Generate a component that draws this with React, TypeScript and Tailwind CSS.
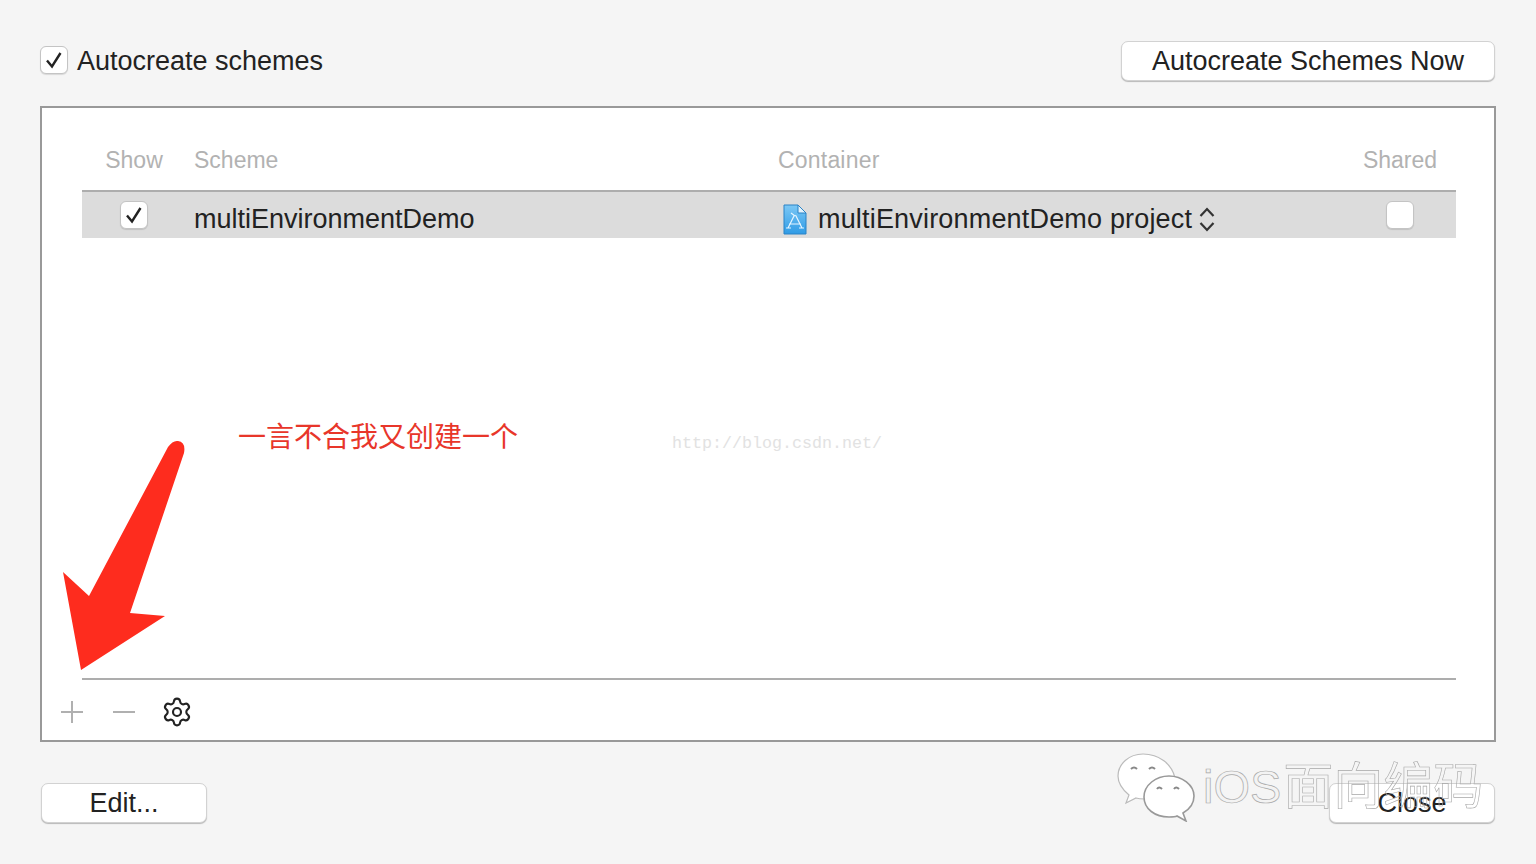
import { Settings } from "lucide-react";

const sans = "font-['Liberation_Sans','Noto_Sans_CJK_SC',sans-serif]";

const Checkbox = ({ checked = false }: { checked?: boolean }) => (
  <span className="flex h-[28px] w-[28px] shrink-0 items-center justify-center rounded-[6px] border border-[#c4c4c4] bg-white shadow-[0_1px_1px_rgba(0,0,0,0.12)]">
    {checked && (
      <svg width="18" height="18" viewBox="0 0 18 18" fill="none">
        <path d="M2 9.500 7 15.500 15.500 2" stroke="#222" strokeWidth="2.4" />
      </svg>
    )}
  </span>
);

const Button = ({ label, className }: { label: string; className: string }) => (
  <button
    className={`flex h-[40px] items-center justify-center rounded-[7px] border border-[#d2d2d2] bg-white text-[27px] text-[#222] shadow-[0_1px_1px_rgba(0,0,0,0.25)] ${className}`}
  >
    {label}
  </button>
);

const ProjectIcon = () => (
  <svg width="24" height="31" viewBox="0 0 24 31" className="shrink-0">
    <defs>
      <linearGradient id="doc" x1="0" y1="0" x2="0" y2="1">
        <stop offset="0" stopColor="#7cc8f5" />
        <stop offset="1" stopColor="#2f9be6" />
      </linearGradient>
    </defs>
    <path d="M1 1h14l8 8v21H1z" fill="url(#doc)" stroke="#2a83c6" />
    <path d="M15 1v8h8z" fill="#e3f3fd" stroke="#2a83c6" />
    <path d="M5 24 11.500 11M19 24 12.500 11M6 20h12M3 24h5M16 24h5M8 9l4 3" stroke="#e4f4ff" strokeWidth="1.2" fill="none" />
  </svg>
);

const WeChat = () => (
  <svg width="80" height="70" viewBox="0 0 80 70" className="shrink-0">
    <path d="M26 2C12 2 1 12 1 24c0 8 5 14 11 19l-3 8 10-5c3 1 6 1 9 1 2-12 14-24 30-21C55 12 42 2 26 2z" fill="#fff" stroke="#bbb" strokeWidth="1.200" />
    <path d="M52 24C39 24 27 33 27 45s11 20 25 20c3 0 6 0 8-1l9 5-3-8c7-4 11-9 11-17 0-11-12-20-25-20z" fill="#fff" stroke="#999" strokeWidth="1.600" />
    <path d="M14 17q3-3 6 0M32 17q3-3 6 0M40 37q2-3 5 0M57 37q2-3 5 0" stroke="#888" strokeWidth="2" fill="none" />
  </svg>
);

export default function App() {
  return (
    <div className={`relative flex h-[864px] w-[1536px] flex-col overflow-hidden bg-[#f5f5f5] ${sans}`}>
      <div className="flex h-[81px] items-start justify-between pl-[40px] pr-[41px] pt-[41px]">
        <label className="flex h-[40px] items-center gap-[9px] text-[27px] text-[#222]">
          <span className="-mt-[2px]">
            <Checkbox checked />
          </span>
          Autocreate schemes
        </label>
        <Button label="Autocreate Schemes Now" className="w-[374px]" />
      </div>

      <div className="ml-[40px] mt-[25px] flex h-[636px] w-[1456px] flex-col border-2 border-[#999] bg-white pl-[40px] pr-[38px]">
        <div className="grid h-[82px] grid-cols-[112px_584px_566px_112px] items-center pt-[22px] text-[23px] text-[#b2b2b2]">
          <span className="w-[104px] text-center">Show</span>
          <span>Scheme</span>
          <span className="tracking-[0.2px]">Container</span>
          <span className="text-center">Shared</span>
        </div>
        <div className="grid h-[48px] grid-cols-[112px_584px_566px_112px] items-center border-t-2 border-[#adadad] bg-[#dcdcdc] text-[27px] text-[#222]">
          <span className="flex w-[104px] justify-center pb-[1px]">
            <Checkbox checked />
          </span>
          <span className="pt-[8px] leading-[32px]">multiEnvironmentDemo</span>
          <span className="flex items-center pl-[5px] pt-[8px] leading-[32px]">
            <ProjectIcon />
            <span className="ml-[11px] tracking-[0.18px]">multiEnvironmentDemo project</span>
            <svg width="18" height="27" viewBox="0 0 18 27" fill="none" className="ml-[6px]">
              <path d="M2.500 10 9 3l6.500 7M2.500 17 9 24l6.500-7" stroke="#333" strokeWidth="2.200" />
            </svg>
          </span>
          <span className="flex justify-center pb-[1px]">
            <Checkbox />
          </span>
        </div>
        <div className="flex-1 border-b-2 border-[#adadad]" />
        <div className="-ml-[22px] flex h-[60px] items-center pt-[3px]">
          <svg width="24" height="24" viewBox="0 0 24 24" fill="none" stroke="#b0b0b0" strokeWidth="2">
            <path d="M1 12h22M12 1v22" />
          </svg>
          <svg width="24" height="24" viewBox="0 0 24 24" fill="none" stroke="#b0b0b0" strokeWidth="2" className="ml-[28px]">
            <path d="M1 12h22" />
          </svg>
          <Settings size={32} strokeWidth={1.6} className="ml-[25px] mt-[1px] text-[#222]" />
        </div>
      </div>

      <div className="mt-[41px] flex justify-between pl-[41px] pr-[41px]">
        <Button label="Edit..." className="w-[166px]" />
        <Button label="Close" className="w-[166px]" />
      </div>

      <svg width="130" height="240" viewBox="0 0 130 240" className="absolute left-[60px] top-[435px]">
        <path d="M108 12Q113 5 118 6Q126 7 124 18L70 178l35 3-84 54L3 137l26 24z" fill="#fe2c1e" />
      </svg>

      <span className="absolute left-[238px] top-[418px] text-[28px] leading-[40px] text-[#e8362a]">一言不合我又创建一个</span>

      <span className="absolute left-[672px] top-[433px] font-['Liberation_Mono',monospace] text-[16.67px] leading-[22px] text-[#e2e2e2]">
        http://blog.csdn.net/
      </span>

      <div className="absolute left-[1117px] top-[752px] flex items-center">
        <WeChat />
        <span className="ml-[6px] text-[47px] leading-[60px] text-[#f3f3f3] [-webkit-text-stroke:0.7px_#a8a8a8]">iOS</span>
        <span className="ml-[2px] text-[50px] leading-[60px] text-transparent [-webkit-text-stroke:0.6px_#a8a8a8]">面向编码</span>
      </div>
    </div>
  );
}
